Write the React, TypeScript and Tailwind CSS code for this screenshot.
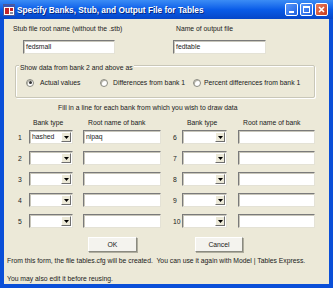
import React, { useState } from "react";

const face = "font-['Liberation_Sans',Arial,sans-serif]";

const TextBox = ({ value, className }: { value?: string; className: string }) => (
  <div
    className={`h-[14px] bg-white border border-t-[#7a7a7a] border-l-[#7a7a7a] border-b-[#e4e2d6] border-r-[#e4e2d6] shadow-[inset_1px_1px_0_#c8c6ba] pl-[2px] text-[6.8px] leading-[12px] ${className}`}
  >
    {value}
  </div>
);

const Combo = ({ value, className }: { value?: string; className: string }) => (
  <div
    className={`h-[14px] flex bg-white border border-t-[#7a7a7a] border-l-[#7a7a7a] border-b-[#e4e2d6] border-r-[#e4e2d6] shadow-[inset_1px_1px_0_#c8c6ba] ${className}`}
  >
    <div className="flex-1 pl-[2px] text-[6.8px] leading-[12px]">{value}</div>
    <div className="w-[10px] mt-[1px] mb-[1px] mr-[1px] bg-[#ece9d8] border border-t-[#fff] border-l-[#fff] border-b-[#6f6f6f] border-r-[#6f6f6f] flex items-center justify-center">
      <svg width="5" height="3" viewBox="0 0 5 3">
        <path d="M0 0h5L2.5 3z" fill="#000" />
      </svg>
    </div>
  </div>
);

const Radio = ({ checked }: { checked?: boolean }) => (
  <div className="w-[8px] h-[8px] rounded-full bg-white border border-[#8a8a80] flex items-center justify-center shadow-[inset_1px_1px_0_#b8b6aa]">
    {checked && <div className="w-[3px] h-[3px] rounded-full bg-[#333]" />}
  </div>
);

const Button = ({ label, className }: { label: string; className: string }) => (
  <div
    className={`h-[15px] bg-[#f4f3ee] border border-t-[#fff] border-l-[#fff] border-b-[#8a8a80] border-r-[#8a8a80] shadow-[1px_1px_0_#b0ae9f] text-center text-[6.8px] leading-[13px] ${className}`}
  >
    {label}
  </div>
);

const rowsLeft = [1, 2, 3, 4, 5];
const rowsRight = [6, 7, 8, 9, 10];

export default function App() {
  const [mode] = useState("actual");

  return (
    <div className={`w-[333px] h-[288px] flex flex-col bg-[#0a4fd8] text-[#1a1a1a] ${face}`}>
      {/* title bar */}
      <div className="h-[19px] flex items-center bg-gradient-to-b from-[#3b8cf5] via-[#0a5ce8] to-[#0646c8] pl-[3px] pr-[5px]">
        <svg width="12" height="12" viewBox="0 0 12 12">
          <rect x="0.5" y="0.5" width="11" height="11" fill="#fff" stroke="#4a5a9a" />
          <rect x="1" y="1" width="10" height="2" fill="#3a56b8" />
          <rect x="2" y="4" width="4" height="6" fill="#c4262a" />
          <rect x="7" y="4" width="3" height="3" fill="#c4262a" />
          <rect x="7" y="8" width="3" height="2" fill="#8a8aa0" />
        </svg>
        <div className="ml-[2px] text-white font-bold text-[8.3px] leading-[10px] [text-shadow:1px_1px_0_#0a2a80]">
          Specify Banks, Stub, and Output File for Tables
        </div>
        <div className="ml-auto flex gap-[2px]">
          <div className="w-[13px] h-[13px] rounded-[2px] border border-white bg-gradient-to-br from-[#5a98fb] to-[#1e5fe0] flex items-end justify-start pl-[3px] pb-[2px]">
            <div className="w-[5px] h-[2px] bg-white" />
          </div>
          <div className="w-[13px] h-[13px] rounded-[2px] border border-white bg-gradient-to-br from-[#5a98fb] to-[#1e5fe0] flex items-center justify-center">
            <div className="w-[7px] h-[7px] border border-white border-t-2" />
          </div>
          <div className="w-[13px] h-[13px] rounded-[2px] border border-white bg-gradient-to-br from-[#e77a5c] to-[#c83a1a] flex items-center justify-center">
            <svg width="7" height="7" viewBox="0 0 7 7">
              <path d="M1 1l5 5M6 1L1 6" stroke="#fff" strokeWidth="1.6" />
            </svg>
          </div>
        </div>
      </div>

      {/* client area */}
      <div className="mx-[4px] mb-[4px] h-[265px] bg-[#ece9d8] text-[6.8px] leading-[9px]">
        <div className="flex pt-[5px]">
          <div className="w-[172px] pl-[9px]">
            <div>Stub file root name (without the .stb)</div>
            <TextBox value="fedsmall" className="mt-[7px] ml-[10px] w-[92px]" />
          </div>
          <div>
            <div>Name of output file</div>
            <TextBox value="fedtable" className="mt-[7px] ml-[-3px] w-[93px]" />
          </div>
        </div>

        <div className="mt-[11px] ml-[11px] w-[300px] h-[33px] border border-[#c9c7b8] rounded-[2px] shadow-[inset_1px_1px_0_#fff,1px_1px_0_#fff]">
          <div className="-mt-[3px] ml-[3px] w-fit px-[1px] bg-[#ece9d8]">Show data from bank 2 and above as</div>
          <div className="mt-[6px] ml-[10px] flex items-center">
            <div className="w-[74px] flex items-center gap-[6px]">
              <Radio checked={mode === "actual"} />
              <span>Actual values</span>
            </div>
            <div className="w-[93px] flex items-center gap-[5px]">
              <Radio />
              <span>Differences from bank 1</span>
            </div>
            <div className="flex items-center gap-[3px]">
              <Radio />
              <span>Percent differences from bank 1</span>
            </div>
          </div>
        </div>

        <div className="mt-[5px] pl-[54px]">Fill in a line for each bank from which you wish to draw data</div>

        <div className="mt-[6px] flex">
          <div className="pl-[14px]">
            <div className="flex">
              <div className="w-[11px]" />
              <div className="w-[54px] pl-[4px]">Bank type</div>
              <div className="pl-[5px]">Root name of bank</div>
            </div>
            <div className="mt-[3px] flex flex-col gap-[7px]">
              {rowsLeft.map((n) => (
                <div key={n} className="flex items-center">
                  <div className="w-[11px]">{n}</div>
                  <Combo value={n === 1 ? "hashed" : undefined} className="w-[44px]" />
                  <TextBox value={n === 1 ? "nipaq" : undefined} className="ml-[10px] w-[78px]" />
                </div>
              ))}
            </div>
          </div>
          <div className="pl-[13px]">
            <div className="flex">
              <div className="w-[8px]" />
              <div className="w-[56px] pl-[5px]">Bank type</div>
              <div className="pl-[5px]">Root name of bank</div>
            </div>
            <div className="mt-[3px] flex flex-col gap-[7px]">
              {rowsRight.map((n) => (
                <div key={n} className="flex items-center">
                  <div className="w-[8px] -ml-[1px] mr-[1px]">{n}</div>
                  <Combo className="w-[45px]" />
                  <TextBox className="ml-[11px] w-[77px]" />
                </div>
              ))}
            </div>
          </div>
        </div>

        <div className="mt-[9px] flex">
          <Button label="OK" className="ml-[84px] w-[49px]" />
          <Button label="Cancel" className="ml-[58px] w-[48px]" />
        </div>

        <div className="mt-[4px] pl-[3px] whitespace-nowrap">
          From this form, the file tables.cfg will be created.&nbsp; You can use it again with Model | Tables Express.
        </div>
        <div className="mt-[9px] pl-[3px]">You may also edit it before reusing.</div>
      </div>
    </div>
  );
}
